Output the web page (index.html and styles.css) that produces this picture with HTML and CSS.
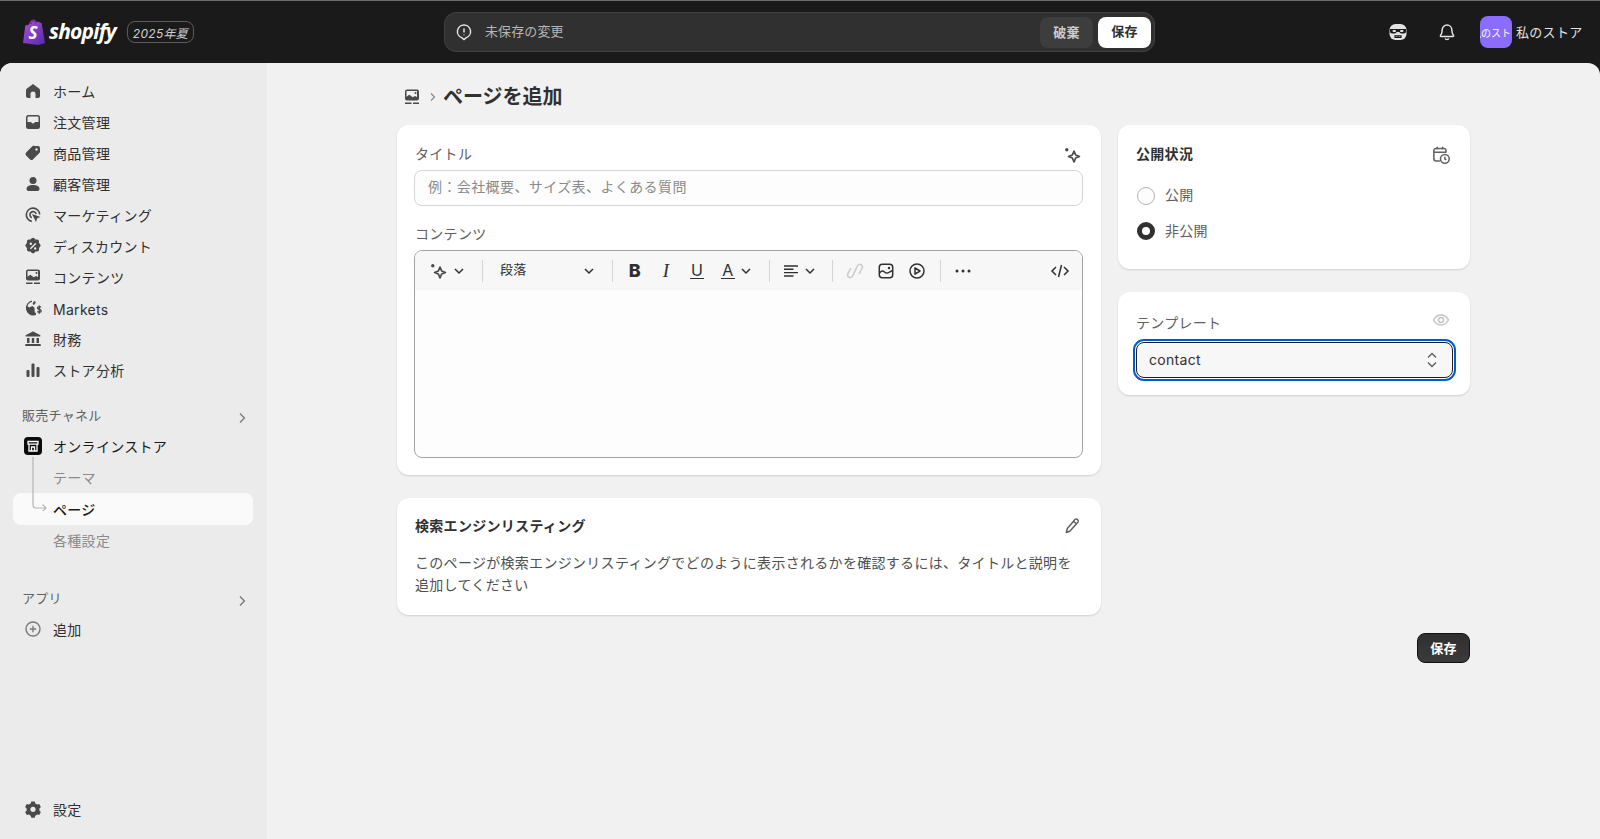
FILE: index.html
```html
<!DOCTYPE html>
<html lang="ja">
<head>
<meta charset="utf-8">
<title>ページを追加</title>
<link rel="stylesheet" href="styles.css">
</head>
<body>
<div class="app">
  <header class="topbar">
    <div class="brand">
      <svg class="bag" viewBox="0 0 22 26">
        <defs><linearGradient id="bagfill" x1="0" y1="0" x2="1" y2="1"><stop offset="0" stop-color="#b650d8"/><stop offset="1" stop-color="#4f2ab0"/></linearGradient></defs>
        <path fill="url(#bagfill)" d="M15 2.600 13.400 3C13 1.600 12 .6 10.800 .6 8.500 .6 6.700 3 6.100 5.400L3.200 6.300C2.400 6.600 2.300 6.600 2.200 7.400L0 24 14.800 26 22 24.300 18.700 4.300C18.600 4 15.800 3.200 15 2.600Z"/>
        <path fill="none" stroke="#2e1a5c" stroke-width=".8" d="M7.800 5C8.300 3 9.500 1.600 10.800 1.600 12 1.600 12.600 3 12.700 4.200"/>
        <text x="5.500" y="20" class="bag-s">S</text>
      </svg>
      <span class="wordmark">shopify</span>
      <span class="edition">2025年夏</span>
    </div>
    <div class="savebar">
      <svg class="ico-sm" viewBox="0 0 20 20" fill="none" stroke="#e3e3e3" stroke-width="1.500"><path d="M10 3a6.500 6.500 0 0 1 2.300 12.600L10 17.500l-2.300-1.900A6.500 6.500 0 0 1 10 3z"/><path d="M10 6.500v4M10 12.500v.8"/></svg>
      <span class="savebar-text">未保存の変更</span>
      <span class="btn-discard">破棄</span>
      <span class="btn-save-top">保存</span>
    </div>
    <div class="top-right">
      <svg class="top-ico" viewBox="0 0 20 20"><rect x="1.500" y="2" width="17" height="16" rx="6" fill="#e3e3e3"/><path fill="#1a1a1a" d="M2 7h16v2.500c0 1.200-1 2-2.200 2h-2c-1 0-1.800-.4-2.300-1.200L10 9.800l-1.500.5c-.5.800-1.300 1.200-2.300 1.200h-2C3 11.500 2 10.700 2 9.500z"/><rect x="4.500" y="8" width="3.500" height="2" rx="1" fill="#e3e3e3"/><rect x="12" y="8" width="3.500" height="2" rx="1" fill="#e3e3e3"/><path fill="none" stroke="#1a1a1a" stroke-width="1.200" d="M7 13.800h6v1.700H7zM10 13.800v1.700"/></svg>
      <svg class="top-ico bell" viewBox="0 0 20 20" fill="none" stroke="#e3e3e3" stroke-width="1.500"><path d="M10 3a4.800 4.800 0 0 0-4.800 4.800c0 3-.7 4.300-1.700 5.700-.3.400 0 .9.400.9h12.200c.4 0 .7-.5.400-.9-1-1.400-1.700-2.700-1.700-5.700A4.800 4.800 0 0 0 10 3z"/><path d="M8 16.500c.4.700 1.100 1 2 1s1.600-.3 2-1"/></svg>
      <span class="avatar"><span class="avatar-text">私のストア</span></span>
      <span class="store-name">私のストア</span>
    </div>
  </header>

  <div class="shell">
    <nav class="sidebar">
      <ul class="nav">
        <li class="nav-item"><svg class="ico" viewBox="0 0 20 20"><path d="M10 3 4 7.400c-.6.400-1 1.100-1 1.800V15a2 2 0 0 0 2 2h2.500v-4a2.500 2.500 0 0 1 5 0v4H15a2 2 0 0 0 2-2V9.200c0-.7-.4-1.400-1-1.800z"/></svg><span>ホーム</span></li>
        <li class="nav-item"><svg class="ico" viewBox="0 0 20 20"><path fill-rule="evenodd" d="M5.500 3A2.500 2.500 0 0 0 3 5.500v9A2.500 2.500 0 0 0 5.500 17h9a2.500 2.500 0 0 0 2.500-2.500v-9A2.500 2.500 0 0 0 14.500 3zM4.500 5.500a1 1 0 0 1 1-1h9a1 1 0 0 1 1 1V10h-3c-.4 0-.8.200-.9.600a1.800 1.800 0 0 1-3.200 0c-.1-.4-.5-.6-.9-.6h-3z"/></svg><span>注文管理</span></li>
        <li class="nav-item"><svg class="ico" viewBox="0 0 20 20"><path fill-rule="evenodd" d="M11.500 3H15a2 2 0 0 1 2 2v3.500c0 .5-.2 1-.6 1.400l-6.500 6.500a2 2 0 0 1-2.800 0l-4-4a2 2 0 0 1 0-2.800l6.500-6.500c.4-.4.900-.6 1.400-.6zm2 2.300a1.200 1.200 0 1 0 0 2.400 1.200 1.200 0 0 0 0-2.400z"/></svg><span>商品管理</span></li>
        <li class="nav-item"><svg class="ico" viewBox="0 0 20 20"><circle cx="10" cy="6.500" r="3.500"/><path d="M3.500 15c0-2.600 2.900-4 6.500-4s6.500 1.400 6.500 4a2 2 0 0 1-2 2h-9a2 2 0 0 1-2-2z"/></svg><span>顧客管理</span></li>
        <li class="nav-item"><svg class="ico" viewBox="0 0 20 20"><path fill="none" stroke="#4a4a4a" stroke-width="1.600" d="M8.800 16.400A6.700 6.700 0 1 1 16.700 9.500"/><path fill="none" stroke="#4a4a4a" stroke-width="1.600" d="M8.800 12.800A3.200 3.200 0 1 1 13.200 9"/><path d="M9 9l8.500 3-3.300 1.300L13 17z"/></svg><span>マーケティング</span></li>
        <li class="nav-item"><svg class="ico" viewBox="0 0 20 20"><path fill-rule="evenodd" d="M8.400 2.600a2.200 2.200 0 0 1 3.200 0l.9.900 1.300-.1a2.200 2.200 0 0 1 2.300 2.300l-.1 1.300.9.900a2.200 2.200 0 0 1 0 3.200l-.9.900.1 1.300a2.200 2.200 0 0 1-2.300 2.300l-1.300-.1-.9.900a2.200 2.200 0 0 1-3.200 0l-.9-.9-1.300.1a2.200 2.200 0 0 1-2.300-2.300l.1-1.300-.9-.9a2.200 2.200 0 0 1 0-3.200l.9-.9-.1-1.300a2.200 2.200 0 0 1 2.300-2.300l1.300.1zM12.300 6.900l-5.400 5.400 1 1 5.400-5.400zM7.800 6.500a1.200 1.200 0 1 0 0 2.400 1.200 1.200 0 0 0 0-2.400zm4.400 4.700a1.200 1.200 0 1 0 0 2.400 1.200 1.200 0 0 0 0-2.400z"/></svg><span>ディスカウント</span></li>
        <li class="nav-item"><svg class="ico" viewBox="0 0 20 20"><use href="#content-art"/></svg><span>コンテンツ</span></li>
        <li class="nav-item"><svg class="ico" viewBox="0 0 20 20"><path d="M9 2.600A7.500 7.500 0 1 0 13 17v-1.800c-.8-.3-1.300-.9-1.400-1.700V10L9.500 8 6 9.500 4.500 8c.5-2 2-3.500 4.500-4z"/><path d="M11 3a5 5 0 0 1 2 1.300L11 7 9.500 6z"/><path fill="none" stroke="#4a4a4a" stroke-width="1.300" d="M18 9.500c-.3-.6-1-.9-1.700-.9-1 0-1.800.5-1.800 1.400 0 2 3.700 1 3.700 3 0 .9-.8 1.400-1.900 1.400-.8 0-1.500-.3-1.900-1M16.300 7.500v8.200"/></svg><span class="latin">Markets</span></li>
        <li class="nav-item"><svg class="ico" viewBox="0 0 20 20"><path d="M9.300 2.700c.4-.2 1-.2 1.400 0l6.300 3.200c.8.400.5 1.600-.4 1.600H3.400c-.9 0-1.200-1.200-.4-1.600z"/><path d="M4 9h2.500v5H4zM8.800 9h2.400v5H8.800zM13.500 9H16v5h-2.500zM3 15h14a.8.800 0 0 1 .8.800V17H2.200v-1.200A.8.800 0 0 1 3 15z"/></svg><span>財務</span></li>
        <li class="nav-item"><svg class="ico" viewBox="0 0 20 20"><rect x="3.500" y="10" width="3" height="7" rx="1"/><rect x="8.500" y="3.500" width="3" height="13.500" rx="1"/><rect x="13.500" y="7" width="3" height="10" rx="1"/></svg><span>ストア分析</span></li>
      </ul>

      <div class="section-head first-head"><span>販売チャネル</span><svg class="chev-right" viewBox="0 0 20 20"><path d="M7.500 4.500 13 10l-5.500 5.500"/></svg></div>
      <div class="tree">
        <div class="nav-item"><svg class="ico store" viewBox="0 0 18 18"><rect width="18" height="18" rx="4" fill="#0b0b0b"/><path fill="none" stroke="#fff" stroke-width="1.300" d="M4 4.500h10v2.700H4zM5 7.200V14h8V7.200M7.500 14v-4h3v4"/></svg><span class="strong-text">オンラインストア</span></div>
        <div class="nav-item sub"><span>テーマ</span></div>
        <div class="nav-item sub active"><span>ページ</span></div>
        <div class="nav-item sub last-sub"><span>各種設定</span></div>
        <svg class="tree-line" viewBox="0 0 16 54" fill="none" stroke="#b5b5b5" stroke-width="1.200"><path d="M1 0v48a3 3 0 0 0 3 3h10M10.500 47.500 14 51l-3.500 3.500"/></svg>
      </div>

      <div class="section-head second-head"><span>アプリ</span><svg class="chev-right" viewBox="0 0 20 20"><path d="M7.500 4.500 13 10l-5.500 5.500"/></svg></div>
      <div class="nav-item"><svg class="ico-line" viewBox="0 0 20 20"><circle cx="10" cy="10" r="7"/><path d="M10 6.800v6.400M6.800 10h6.400"/></svg><span>追加</span></div>

      <div class="nav-item settings"><svg class="ico" viewBox="0 0 20 20"><path fill-rule="evenodd" d="M8.300 2.500h3.400l.6 2 1.900 1.100 2-.5 1.700 3-1.500 1.400v2.200l1.500 1.400-1.700 3-2-.5-1.900 1.100-.6 2H8.300l-.6-2-1.900-1.100-2 .5-1.700-3 1.500-1.400V9.500L2.100 8.100l1.700-3 2 .5 1.900-1.100zM10 7.700a2.600 2.600 0 1 0 0 5.200 2.600 2.600 0 0 0 0-5.200z"/></svg><span>設定</span></div>
    </nav>

    <main class="main">
      <div class="page">
        <div class="crumbs">
          <svg class="crumb-ico" viewBox="0 0 20 20"><symbol id="content-art" viewBox="0 0 20 20"><path fill-rule="evenodd" d="M5 2.500h10A2 2 0 0 1 17 4.500v7a2 2 0 0 1-2 2H5a2 2 0 0 1-2-2v-7a2 2 0 0 1 2-2zm0 1.500a.5.500 0 0 0-.5.500v5.200l2.800-2 3.500 2.500 2.200-1.300 2 1.200V4.500A.5.500 0 0 0 15 4zm8.500 1a1 1 0 1 0 0 2 1 1 0 0 0 0-2z"/><path d="M3 15.500h6.500V17H3zM11 15.500h6V17h-6z"/></symbol><use href="#content-art"/></svg>
          <svg class="crumb-chev" viewBox="0 0 10 10"><path d="M3 1.500 6.500 5 3 8.500"/></svg>
          <h1 class="page-title">ページを追加</h1>
        </div>

        <div class="columns">
          <div class="col">
            <section class="card card-main">
              <div class="label-row"><span class="label">タイトル</span><svg class="spark" viewBox="0 0 20 20"><use href="#sparkle"/></svg></div>
              <div class="input">例：会社概要、サイズ表、よくある質問</div>
              <div class="label content-label">コンテンツ</div>
              <div class="editor">
                <div class="toolbar">
                  <div class="tgroup g1">
                    <svg class="tool" viewBox="0 0 20 20"><symbol id="sparkle" viewBox="0 0 20 20"><circle cx="4.800" cy="4.800" r="1.700" fill="#4a4a4a"/><path fill="none" stroke="#4a4a4a" stroke-width="1.600" stroke-linejoin="round" d="M12 6l1.600 3.900 3.900 1.600-3.900 1.600L12 17l-1.600-3.900-3.900-1.600 3.900-1.600z"/></symbol><use href="#sparkle"/></svg>
                    <svg class="chev-down" viewBox="0 0 12 12"><path d="M2 4l4 4 4-4"/></svg>
                  </div>
                  <div class="tgroup g2"><span class="para">段落</span><svg class="chev-down" viewBox="0 0 12 12"><path d="M2 4l4 4 4-4"/></svg></div>
                  <div class="tgroup g3">
                    <span class="tool t-b">B</span>
                    <span class="tool t-i">I</span>
                    <span class="tool t-u"><span class="uline">U</span></span>
                    <span class="split"><span class="tool t-u"><span class="uline">A</span></span><svg class="chev-down" viewBox="0 0 12 12"><path d="M2 4l4 4 4-4"/></svg></span>
                  </div>
                  <div class="tgroup g4">
                    <svg class="tool" viewBox="0 0 20 20" fill="none" stroke="#303030" stroke-width="1.400"><path d="M3 5h14M3 8.300h9.500M3 11.600h14M3 15h9.500"/></svg>
                    <svg class="chev-down" viewBox="0 0 12 12"><path d="M2 4l4 4 4-4"/></svg>
                  </div>
                  <div class="tgroup g5">
                    <svg class="tool" viewBox="0 0 20 20" fill="none" stroke="#cccccc" stroke-width="1.500"><path d="M8.800 12.200 12.500 4.800a2.600 2.600 0 0 1 4.600 2.500l-3 5.500M11.200 7.800 7.500 15.200a2.600 2.600 0 0 1-4.600-2.500l3-5.500"/></svg>
                    <svg class="tool" viewBox="0 0 20 20"><rect x="3.300" y="3.300" width="13.400" height="13.400" rx="3" fill="none" stroke="#303030" stroke-width="1.500"/><path fill="none" stroke="#303030" stroke-width="1.400" d="M3.500 12c2-2.500 3.500-2.500 5-1s3 1.500 5 0l3-1.500"/><circle cx="13" cy="7" r="1.200" fill="#303030"/></svg>
                    <svg class="tool" viewBox="0 0 20 20" fill="none" stroke="#303030" stroke-width="1.500"><circle cx="10" cy="10" r="7"/><path stroke-linejoin="round" d="M8 6.800v6.400l5-3.200z"/></svg>
                  </div>
                  <div class="tgroup g6"><svg class="tool" viewBox="0 0 20 20" fill="#303030"><circle cx="4" cy="10" r="1.500"/><circle cx="10" cy="10" r="1.500"/><circle cx="16" cy="10" r="1.500"/></svg></div>
                  <svg class="tool code" viewBox="0 0 20 20" fill="none" stroke="#303030" stroke-width="1.500"><path d="M6 6l-4 4 4 4M14 6l4 4-4 4M11.500 4l-3 12"/></svg>
                </div>
                <div class="editor-body"></div>
              </div>
            </section>

            <section class="card card-seo">
              <div class="card-head"><h2 class="card-title">検索エンジンリスティング</h2><svg class="pencil" viewBox="0 0 20 20" fill="none" stroke="#616161" stroke-width="1.500" stroke-linejoin="round"><path d="M13 3.500a2 2 0 0 1 2.900 2.700L8 15l-3.700 1.500L5.300 12.500zM11.500 5.200l3 2.800"/></svg></div>
              <p class="seo-text">このページが検索エンジンリスティングでどのように表示されるかを確認するには、タイトルと説明を追加してください</p>
            </section>
          </div>

          <div class="col">
            <section class="card card-status side-card">
              <div class="card-head"><h2 class="card-title">公開状況</h2><svg class="cal" viewBox="0 0 20 20" fill="none" stroke="#616161" stroke-width="1.400"><path d="M9 15.500H5.500a2 2 0 0 1-2-2V6a2 2 0 0 1 2-2h7a2 2 0 0 1 2 2v2M3.500 7.500h11M6.500 2.500v2.500M11.500 2.500v2.500"/><circle cx="13.500" cy="13.500" r="4"/><path d="M13.500 11.500v2l1.300 1"/></svg></div>
              <div class="radio-row"><span class="radio"></span><span class="radio-label">公開</span></div>
              <div class="radio-row"><span class="radio on"></span><span class="radio-label">非公開</span></div>
            </section>

            <section class="card card-template side-card">
              <div class="label-row tpl-row"><span class="label">テンプレート</span><svg class="eye" viewBox="0 0 20 20" fill="none" stroke="#c4c4c4" stroke-width="1.500"><path d="M2.500 10c1.800-3.200 4.300-5 7.500-5s5.700 1.800 7.500 5c-1.800 3.200-4.300 5-7.500 5s-5.700-1.800-7.500-5z"/><circle cx="10" cy="10" r="2.500"/></svg></div>
              <div class="select"><span>contact</span><svg class="updown" viewBox="0 0 12 20"><path d="M2 7.500l4-4 4 4M2 12.500l4 4 4-4"/></svg></div>
            </section>
          </div>
        </div>

        <div class="page-foot"><span class="btn-primary">保存</span></div>
      </div>
    </main>
  </div>
</div>
</body>
</html>
```

FILE: styles.css
```css
* { box-sizing: border-box; }
html, body { margin: 0; height: 100%; overflow: hidden; }
body {
  font-family: Inter, "Noto Sans CJK JP", sans-serif;
  font-size: 14px;
  letter-spacing: .3px;
  color: #303030;
  background: #1a1a1a;
}
ul { list-style: none; margin: 0; padding: 0; }
h1, h2, p { margin: 0; }

.app { display: flex; flex-direction: column; height: 839px; }

/* top bar */
.topbar {
  height: 63px;
  flex: none;
  display: flex;
  align-items: center;
  background: #1a1a1a;
  border-top: 1px solid #6b6b6b;
  padding-left: 23px;
}
.brand { display: flex; align-items: center; width: 421px; }
.bag { width: 22px; height: 26px; flex: none; }
.bag-s { font: italic 700 17px "Open Sans", sans-serif; fill: #fff; }
.wordmark {
  font: italic 700 21px "Open Sans", sans-serif;
  letter-spacing: -.8px;
  color: #fff;
  margin-left: 4px;
  width: 78px;
  position: relative;
  top: -1px;
}
.edition {
  height: 22px;
  width: 67px;
  display: flex;
  align-items: center;
  justify-content: center;
  border: 1px solid #5c5c5c;
  border-radius: 8px;
  font-size: 12px;
  font-style: italic;
  color: #cfcfcf;
}
.savebar {
  width: 711px;
  height: 40px;
  display: flex;
  align-items: center;
  background: #303030;
  border: 1px solid #414141;
  border-radius: 12px;
  padding: 0 3px 0 9px;
}
.ico-sm { width: 20px; height: 20px; flex: none; }
.savebar-text { font-size: 13px; letter-spacing: .1px; color: #b5b5b5; margin-left: 11px; flex: 1; padding-bottom: 3px; }
.btn-discard {
  width: 53px; height: 31px;
  display: flex; align-items: center; justify-content: center;
  padding-bottom: 2px;
  background: #3d3d3d;
  border-radius: 8px;
  font-size: 13px; font-weight: 700;
  color: #cccccc;
}
.btn-save-top {
  width: 53px; height: 31px;
  margin-left: 5px;
  display: flex; align-items: center; justify-content: center;
  padding-bottom: 3px;
  background: #fff;
  border-radius: 8px;
  font-size: 13px; font-weight: 700;
  color: #303030;
}
.top-right { display: flex; align-items: center; margin-left: 233px; }
.top-ico { width: 20px; height: 20px; flex: none; }
.bell { margin-left: 29px; }
.avatar {
  width: 32px; height: 32px;
  margin-left: 23px;
  border-radius: 8px;
  background: #8a6cff;
  overflow: hidden;
  display: flex; align-items: center; justify-content: center;
}
.avatar-text { font-size: 10px; letter-spacing: 0; color: #fff; white-space: nowrap; flex: none; }
.store-name { font-size: 13px; color: #e3e3e3; margin-left: 4px; white-space: nowrap; padding-bottom: 2px; }

/* shell */
.shell {
  flex: 1;
  min-height: 0;
  display: flex;
  background: #f1f1f1;
  border-radius: 12px 12px 0 0;
  overflow: hidden;
}

/* sidebar */
.sidebar {
  width: 267px;
  flex: none;
  background: #ebebeb;
  padding: 12px 14px 15px 13px;
  display: flex;
  flex-direction: column;
}
.nav-item {
  height: 31px;
  display: flex;
  align-items: center;
  gap: 10px;
  padding-left: 10px;
  border-radius: 8px;
  color: #303030;
  white-space: nowrap;
}
.ico { width: 20px; height: 20px; flex: none; fill: #4a4a4a; }
.ico-line { width: 20px; height: 20px; flex: none; fill: none; stroke: #7a7a7a; stroke-width: 1.400; }
.ico.store { width: 18px; height: 18px; margin: 0 1px; }
.latin { padding-top: 3px; }
.strong-text { color: #1a1a1a; }
.section-head {
  height: 31px;
  display: flex;
  align-items: center;
  justify-content: space-between;
  padding: 0 3px 0 9px;
  font-size: 13px;
  color: #616161;
}
.first-head { margin-top: 14px; }
.second-head { margin-top: 27px; }
.chev-right {
  width: 16px; height: 16px;
  fill: none; stroke: #7a7a7a; stroke-width: 1.700;
  margin-top: 6px;
}
.tree { position: relative; }
.sub { padding-left: 40px; color: #8a8a8a; }
.active { background: #fafafa; color: #1a1a1a; font-weight: 500; height: 32px; margin-top: 1px; }
.last-sub { height: 30px; }
.tree-line { position: absolute; left: 19px; top: 27px; width: 16px; height: 54px; }
.settings { margin-top: auto; }

/* main */
.main { flex: 1; min-width: 0; padding-top: 17px; }
.page { width: 1073px; margin: 0 auto; }
.crumbs { height: 32px; display: flex; align-items: center; padding: 1px 0 0 5px; }
.crumb-ico { width: 20px; height: 20px; fill: #4a4a4a; flex: none; }
.crumb-chev { width: 10px; height: 10px; fill: none; stroke: #8a8a8a; stroke-width: 1.200; margin: 1px 5px 0 6px; }
.page-title { font-size: 20px; font-weight: 700; letter-spacing: 0; line-height: 32px; color: #303030; }

.columns {
  margin-top: 13px;
  display: grid;
  grid-template-columns: 704px 352px;
  gap: 17px;
  align-items: start;
}
.col { display: flex; flex-direction: column; gap: 23px; }
.card {
  background: #fff;
  border-radius: 12px;
  padding: 19px 18px 19px 17px;
  box-shadow: 0 1px 2px rgba(0, 0, 0, .14);
}
.side-card { padding: 19px 17px 19px 18px; }
.card-main { height: 350px; }
.label-row { display: flex; justify-content: space-between; align-items: center; height: 20px; padding-left: 1px; }
.label { color: #616161; line-height: 20px; }
.spark { width: 20px; height: 20px; flex: none; margin: 1px 1px -1px 0; }
.input {
  margin-top: 6px;
  height: 36px;
  display: flex;
  align-items: center;
  padding: 0 0 5px 13px;
  background: #fdfdfd;
  border: 1px solid #d4d4d4;
  border-radius: 8px;
  letter-spacing: .4px;
  color: #8a8a8a;
}
.content-label { display: block; margin-top: 18px; height: 20px; padding-left: 1px; }
.editor {
  margin-top: 6px;
  height: 208px;
  border: 1px solid #a3a3a3;
  border-radius: 8px;
  overflow: hidden;
  display: flex;
  flex-direction: column;
  background: #fdfdfd;
}
.toolbar {
  height: 39px;
  flex: none;
  display: flex;
  align-items: center;
  background: #f7f7f7;
  padding-right: 12px;
}
.tgroup { display: flex; align-items: center; height: 22px; border-right: 1px solid #d4d4d4; padding-right: 17px; padding-left: 12px; }
.g1 { gap: 5px; padding-left: 13px; }
.g2 { width: 130px; padding-left: 17px; justify-content: space-between; }
.g3 { gap: 11px; }
.g4 { gap: 3px; padding-left: 11px; padding-right: 16px; }
.g5 { gap: 11px; padding-right: 13px; }
.g6 { border-right: 0; padding-left: 12px; }
.tool {
  width: 20px; height: 20px;
  flex: none;
  display: flex; align-items: center; justify-content: center;
}
.code { margin-left: auto; }
.para { font-size: 13px; color: #303030; padding-bottom: 4px; }
.chev-down { width: 12px; height: 12px; flex: none; fill: none; stroke: #303030; stroke-width: 1.500; }
.split { display: flex; align-items: center; gap: 2px; }
.t-b { font-size: 18px; font-weight: 800; color: #303030; }
.t-i { font: italic 400 19px "Liberation Serif", serif; color: #303030; }
.t-u { font-size: 16px; color: #303030; }
.uline { border-bottom: 1.500px solid #303030; line-height: 16px; padding: 0 1px; }
.editor-body { flex: 1; }

.card-seo { height: 117px; padding-top: 18px; }
.card-head { display: flex; justify-content: space-between; align-items: center; height: 20px; padding-left: 1px; }
.side-card .card-head, .side-card .label-row { padding-left: 0; }
.card-title { font-size: 14px; font-weight: 700; color: #303030; line-height: 20px; }
.pencil { width: 20px; height: 20px; flex: none; margin-right: 1px; }
.cal { width: 22px; height: 22px; flex: none; margin: 2px 1px 0 0; }
.seo-text { margin-top: 16px; padding-left: 1px; line-height: 22px; color: #505050; }

.card-status { height: 144px; }
.radio-row { height: 35.5px; display: flex; align-items: center; gap: 10px; padding-left: 1px; }
.card-head + .radio-row { margin-top: 14px; }
.radio {
  width: 18px; height: 18px;
  border: 1px solid #b5b5b5;
  border-radius: 50%;
  background: #fdfdfd;
  flex: none;
}
.radio.on { border: 5px solid #303030; background: #fff; }
.radio-label { color: #616161; padding-bottom: 3px; }

.card-template { height: 103px; padding-top: 21px; }
.tpl-row { height: 20px; }
.eye { width: 20px; height: 20px; margin: -6px 2px 0 0; flex: none; }
.select {
  margin-top: 9px;
  height: 36px;
  display: flex;
  align-items: center;
  justify-content: space-between;
  padding: 0 14px 0 12px;
  background: #f7f7f7;
  border: 1px solid #1f1f1f;
  border-radius: 8px;
  outline: 2px solid #005bd3;
  outline-offset: 1px;
  color: #303030;
  font-size: 14px;
}
.select span { padding-bottom: 2px; }
.updown { width: 12px; height: 20px; fill: none; stroke: #616161; stroke-width: 1.400; }

.page-foot { display: flex; justify-content: flex-end; margin-top: 18px; }
.btn-primary {
  width: 53px; height: 30px;
  display: flex; align-items: center; justify-content: center;
  padding-bottom: 2px;
  background: linear-gradient(#2f2f2f, #3b3b3b);
  border: 1px solid #111;
  border-radius: 8px;
  color: #fff;
  font-size: 13px;
  font-weight: 700;
}
```
